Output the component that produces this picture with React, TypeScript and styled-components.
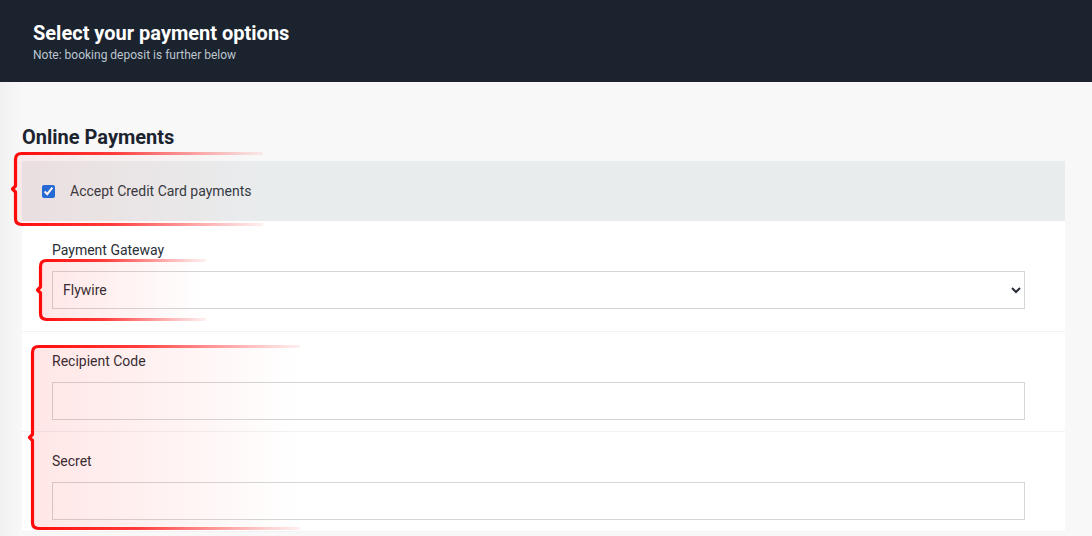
import React from "react";
import styled, { createGlobalStyle } from "styled-components";

const GlobalStyle = createGlobalStyle`
  html, body {
    margin: 0;
    padding: 0;
  }
  body {
    font-family: Roboto, "Liberation Sans", Arial, sans-serif;
    background: linear-gradient(to right, #f1f1f1 0px, #f8f8f8 22px);
    color: #212529;
  }
`;

const Page = styled.div`
  position: relative;
  width: 1092px;
  min-height: 536px;
  overflow: hidden;
`;

const Header = styled.header`
  height: 82px;
  box-sizing: border-box;
  background: #1b232e;
  padding: 21px 33px 0;
`;

const Title = styled.h1`
  margin: 0;
  color: #ffffff;
  font-size: 20px;
  line-height: 24px;
  font-weight: 700;
`;

const Subtitle = styled.div`
  margin-top: 3px;
  color: #bcc6d0;
  font-size: 12px;
  line-height: 14px;
`;

const Main = styled.main`
  padding: 0 27px 0 22px;
`;

const SectionTitle = styled.h2`
  margin: 43px 0 12px;
  font-size: 20px;
  line-height: 24px;
  font-weight: 700;
  color: #1c2430;
`;

const CheckRow = styled.label`
  display: flex;
  align-items: center;
  gap: 15px;
  height: 60px;
  padding-left: 20px;
  background: #e9eced;
  font-size: 14px;
  color: #333a42;
`;

const Check = styled.input`
  width: 13px;
  height: 13px;
  margin: 0;
  accent-color: #1a6fe0;
`;

const Panel = styled.div`
  background: #ffffff;
`;

const FieldRow = styled.div<{ $bottom: number }>`
  padding: 21px 40px ${(p) => p.$bottom}px 30px;
  border-bottom: 1px solid #f1f2f3;
`;

const FieldLabel = styled.div`
  font-size: 14px;
  line-height: 17px;
  color: #2a2f36;
  margin-bottom: 12px;
`;

const Select = styled.select`
  display: block;
  width: 100%;
  height: 38px;
  box-sizing: border-box;
  border: 1px solid #d6d6d6;
  border-radius: 0;
  background: #ffffff;
  padding: 0 6px;
  font-family: Roboto, "Liberation Sans", Arial, sans-serif;
  font-size: 14px;
  color: #2a2f36;
`;

const TextInput = styled.input`
  display: block;
  width: 100%;
  height: 38px;
  box-sizing: border-box;
  border: 1px solid #d6d6d6;
  border-radius: 0;
  background: #ffffff;
  padding: 0 10px;
  font-family: Roboto, "Liberation Sans", Arial, sans-serif;
  font-size: 14px;
`;

const BracketSvg = styled.svg`
  position: absolute;
  pointer-events: none;
  overflow: visible;
`;

type BracketProps = { id: string; x: number; y: number; w: number; h: number; tint: number };

// red curly-brace annotation that fades out to the right
function Bracket({ id, x, y, w, h, tint }: BracketProps) {
  const x0 = 4.5;
  const t = 1.5;
  const r = 6;
  const mid = h / 2;
  const d = [
    `M ${w} ${t}`,
    `L ${x0 + r} ${t}`,
    `Q ${x0} ${t} ${x0} ${t + r}`,
    `L ${x0} ${mid - 3}`,
    `L ${x0 - 3} ${mid}`,
    `L ${x0} ${mid + 3}`,
    `L ${x0} ${h - t - r}`,
    `Q ${x0} ${h - t} ${x0 + r} ${h - t}`,
    `L ${w} ${h - t}`,
  ].join(" ");
  return (
    <BracketSvg style={{ left: x, top: y }} width={w} height={h} viewBox={`0 0 ${w} ${h}`}>
      <defs>
        <linearGradient id={`${id}-s`} x1="0" y1="0" x2={w} y2="0" gradientUnits="userSpaceOnUse">
          <stop offset="0" stopColor="#ff0808" stopOpacity="1" />
          <stop offset="0.4" stopColor="#ff1a1a" stopOpacity="0.85" />
          <stop offset="1" stopColor="#ff4040" stopOpacity="0.08" />
        </linearGradient>
        <linearGradient id={`${id}-f`} x1="0" y1="0" x2={w} y2="0" gradientUnits="userSpaceOnUse">
          <stop offset="0" stopColor="#ff0000" stopOpacity={tint} />
          <stop offset="1" stopColor="#ff0000" stopOpacity="0" />
        </linearGradient>
      </defs>
      <rect x={x0} y={t} width={w - x0} height={h - 2 * t} fill={`url(#${id}-f)`} />
      <path d={d} fill="none" stroke={`url(#${id}-s)`} strokeWidth="3.2" strokeLinejoin="round" />
    </BracketSvg>
  );
}

export default function App() {
  return (
    <Page>
      <GlobalStyle />
      <Header>
        <Title>Select your payment options</Title>
        <Subtitle>Note: booking deposit is further below</Subtitle>
      </Header>
      <Main>
        <SectionTitle>Online Payments</SectionTitle>
        <CheckRow>
          <Check type="checkbox" defaultChecked />
          Accept Credit Card payments
        </CheckRow>
        <Panel>
          <FieldRow $bottom={22}>
            <FieldLabel>Payment Gateway</FieldLabel>
            <Select defaultValue="flywire">
              <option value="flywire">Flywire</option>
            </Select>
          </FieldRow>
          <FieldRow $bottom={11}>
            <FieldLabel>Recipient Code</FieldLabel>
            <TextInput type="text" />
          </FieldRow>
          <FieldRow $bottom={11}>
            <FieldLabel>Secret</FieldLabel>
            <TextInput type="password" />
          </FieldRow>
        </Panel>
      </Main>
      <Bracket id="b1" x={11} y={152} w={252} h={74} tint={0.06} />
      <Bracket id="b2" x={36} y={259} w={170} h={62} tint={0.1} />
      <Bracket id="b3" x={28} y={345} w={272} h={185} tint={0.1} />
    </Page>
  );
}
